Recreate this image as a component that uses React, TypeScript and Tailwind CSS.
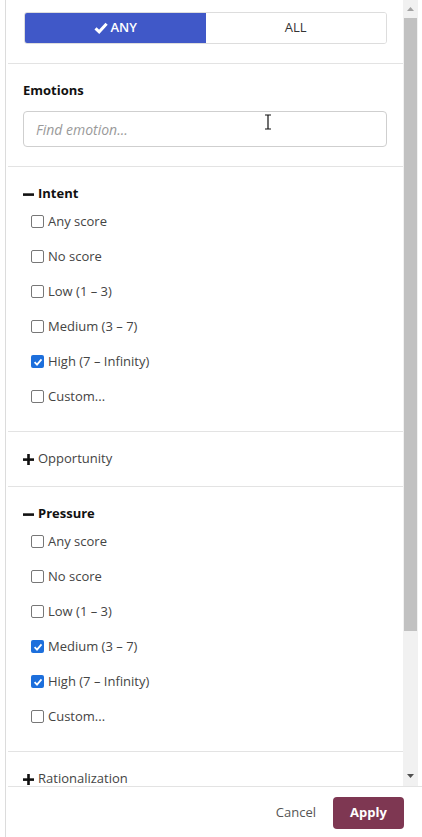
import React from "react";

type Opt = { label: string; checked?: boolean };

const intentOpts: Opt[] = [
  { label: "Any score" },
  { label: "No score" },
  { label: "Low (1 – 3)" },
  { label: "Medium (3 – 7)" },
  { label: "High (7 – Infinity)", checked: true },
  { label: "Custom..." },
];

const pressureOpts: Opt[] = [
  { label: "Any score" },
  { label: "No score" },
  { label: "Low (1 – 3)" },
  { label: "Medium (3 – 7)", checked: true },
  { label: "High (7 – Infinity)", checked: true },
  { label: "Custom..." },
];

const Minus = () => (
  <svg width="11" height="11" viewBox="0 0 11 11" className="shrink-0">
    <rect x="0" y="4.3" width="11" height="2.6" fill="#111" />
  </svg>
);

const Plus = () => (
  <svg width="11" height="11" viewBox="0 0 11 11" className="shrink-0">
    <rect x="0" y="4.3" width="11" height="2.6" fill="#111" />
    <rect x="4.2" y="0" width="2.6" height="11" fill="#111" />
  </svg>
);

const Box = ({ checked }: { checked?: boolean }) =>
  checked ? (
    <span className="w-[13px] h-[13px] rounded-[2px] bg-[#1d6fdc] flex items-center justify-center shrink-0">
      <svg width="10" height="10" viewBox="0 0 10 10">
        <path d="M1.6 5.2 L4 7.6 L8.5 2.4" stroke="white" strokeWidth="1.8" fill="none" />
      </svg>
    </span>
  ) : (
    <span className="w-[13px] h-[13px] rounded-[2px] border border-[#777] bg-white shrink-0" />
  );

const Options = ({ opts }: { opts: Opt[] }) => (
  <div className="flex flex-col pl-2">
    {opts.map((o) => (
      <div key={o.label} className="h-[35px] flex items-center gap-1 text-[#444]">
        <Box checked={o.checked} />
        <span>{o.label}</span>
      </div>
    ))}
  </div>
);

const Section = ({
  title,
  open,
  children,
}: {
  title: string;
  open: boolean;
  children?: React.ReactNode;
}) => (
  <div className="border-t border-[#e3e3e3] ml-[2px] pl-[15px] pt-[17px] pb-[17px]">
    <div className="h-5 flex items-center gap-[4px]">
      {open ? <Minus /> : <Plus />}
      <span className={open ? "font-bold text-[#111]" : "text-[#444]"}>{title}</span>
    </div>
    {children}
  </div>
);

export default function App() {
  return (
    <div
      className="w-[422px] h-[837px] bg-white flex flex-col text-[13px] overflow-hidden"
      style={{ fontFamily: '"Open Sans", "Noto Sans", sans-serif' }}
    >
      <div className="flex flex-col h-full ml-[5px] border-l border-[#dcdcdc]">
        <div className="flex h-[786px]">
          {/* content */}
          <div className="flex-1 overflow-hidden flex flex-col">
            <div className="pt-3 pb-[19px] pl-[18px] pr-[16px]">
              <div className="flex h-8 rounded-[3px] border border-[#dddddd] overflow-hidden">
                <div className="flex-1 bg-[#4058c8] text-white font-semibold flex items-center justify-center gap-[3px]">
                  <svg width="14" height="12" viewBox="0 0 14 12">
                    <path d="M1.5 6.3 L5.2 9.8 L12.6 1.8" stroke="white" strokeWidth="3" fill="none" />
                  </svg>
                  <span>ANY</span>
                </div>
                <div className="flex-1 bg-white text-[#333] flex items-center justify-center">ALL</div>
              </div>
            </div>

            <div className="border-t border-[#e3e3e3] ml-[2px] pl-[15px] pr-[16px] pt-[17px] pb-[19px]">
              <div className="h-5 flex items-center font-bold text-[#111]">Emotions</div>
              <div className="relative mt-[10px] h-9 rounded-[4px] border border-[#cfcfcf] flex items-center px-3">
                <span className="italic text-[#9a9a9a] text-[14px]">Find emotion...</span>
                <svg width="8" height="16" viewBox="0 0 8 16" className="absolute left-[240px] top-[2px]">
                  <path d="M1 1 H7 M4 1 V15 M1 15 H7" stroke="#111" strokeWidth="1.2" fill="none" />
                </svg>
              </div>
            </div>

            <Section title="Intent" open>
              <Options opts={intentOpts} />
            </Section>
            <Section title="Opportunity" open={false} />
            <Section title="Pressure" open>
              <Options opts={pressureOpts} />
            </Section>
            <Section title="Rationalization" open={false} />
          </div>

          {/* scrollbar */}
          <div className="w-[15px] mr-[4px] bg-[#f1f1f1] flex flex-col items-center">
            <div className="h-[18px] flex items-center justify-center">
              <svg width="7" height="4" viewBox="0 0 7 4">
                <path d="M0 4 L3.5 0 L7 4 Z" fill="#a3a3a3" />
              </svg>
            </div>
            <div className="w-[13px] h-[613px] bg-[#c1c1c1]" />
            <div className="flex-1" />
            <div className="h-[20px] flex items-center justify-center">
              <svg width="7" height="4" viewBox="0 0 7 4">
                <path d="M0 0 L7 0 L3.5 4 Z" fill="#505050" />
              </svg>
            </div>
          </div>
        </div>

        {/* footer */}
        <div className="flex-1 border-t border-[#e3e3e3] ml-[2px] flex items-start justify-end pt-[10px] pr-[18px] gap-[17px]">
          <button className="h-8 flex items-center text-[#555] text-[13px]">Cancel</button>
          <button className="h-8 w-[71px] rounded-[4px] bg-[#7e3752] text-white font-bold text-[13px] flex items-center justify-center">
            Apply
          </button>
        </div>
      </div>
    </div>
  );
}
